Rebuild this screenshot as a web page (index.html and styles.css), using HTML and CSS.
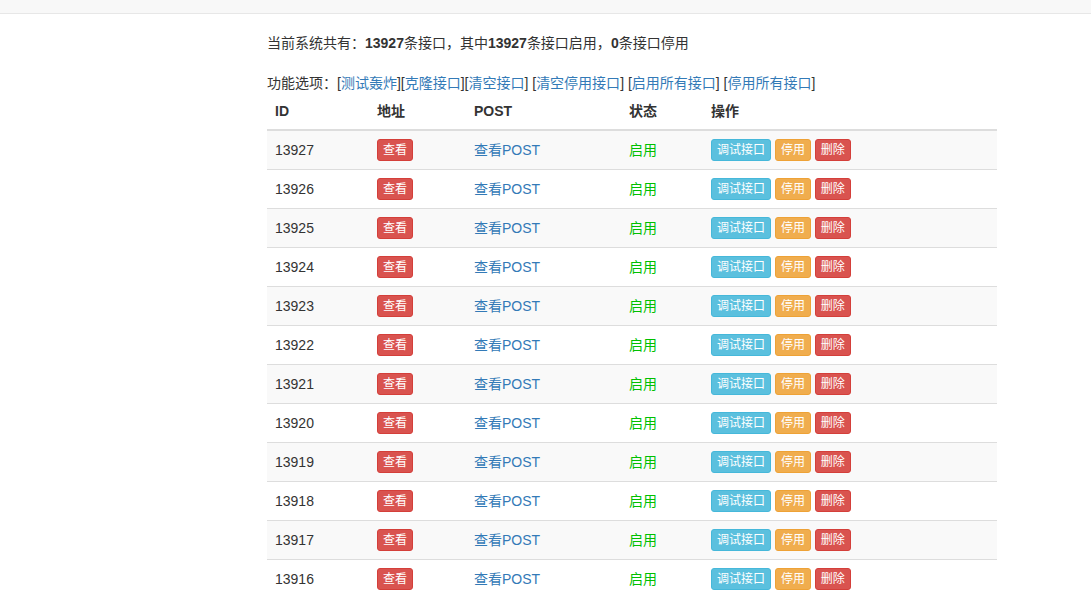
FILE: index.html
```html
<!DOCTYPE html>
<html>
<head>
  <meta charset="UTF-8">
  <title>接口管理</title>
  <link rel="stylesheet" href="styles.css">
</head>
<body>
  <div class="navbar"></div>
  <div class="container">
    当前系统共有：<b>13927</b>条接口，其中<b>13927</b>条接口启用，<b>0</b>条接口停用<br><br>
    功能选项：[<a href="#">测试轰炸</a>][<a href="#">克隆接口</a>][<a href="#">清空接口</a>] [<a href="#">清空停用接口</a>] [<a href="#">启用所有接口</a>] [<a href="#">停用所有接口</a>]
    <table class="table">
      <thead>
        <tr>
          <th class="c-id">ID</th>
          <th class="c-url">地址</th>
          <th class="c-post">POST</th>
          <th class="c-state">状态</th>
          <th>操作</th>
        </tr>
      </thead>
      <tbody id="rows"></tbody>
    </table>
  </div>
  <script>
    var rows = document.getElementById("rows");
    var html = "";
    // newest interfaces first
    for (var id = 13927; id >= 13914; id--) {
      html += "<tr>" +
        "<td>" + id + "</td>" +
        "<td><a class=\"btn btn-danger\" href=\"#\">查看</a></td>" +
        "<td><a href=\"#\">查看POST</a></td>" +
        "<td class=\"on\">启用</td>" +
        "<td><a class=\"btn btn-info\" href=\"#\">调试接口</a> " +
        "<a class=\"btn btn-warning\" href=\"#\">停用</a> " +
        "<a class=\"btn btn-danger\" href=\"#\">删除</a></td>" +
        "</tr>";
    }
    rows.innerHTML = html;
  </script>
</body>
</html>
```

FILE: styles.css
```css
body {
  margin: 0;
  font-family: "Liberation Sans", "Noto Sans CJK SC", sans-serif;
  font-size: 14px;
  line-height: 20px;
  color: #333;
  background: #fff;
}
a {
  color: #337ab7;
  text-decoration: none;
}
.navbar {
  height: 13px;
  background-color: #f8f8f8;
  border-bottom: 1px solid #e7e7e7;
  margin-bottom: 19px;
}
.container {
  width: 730px;
  margin-left: 267px;
}
.table {
  width: 730px;
  border-collapse: collapse;
  table-layout: fixed;
  margin-bottom: 20px;
}
.table th,
.table td {
  padding: 8px;
  text-align: left;
  vertical-align: middle;
  line-height: 20px;
  border-top: 1px solid #ddd;
}
.table td {
  height: 22px;
  padding-top: 8px;
  padding-bottom: 8px;
}
.table th {
  border-top: 0;
  border-bottom: 2px solid #ddd;
  font-weight: bold;
}
.table tbody tr:nth-child(odd) {
  background-color: #f9f9f9;
}
.c-id { width: 86px; }
.c-url { width: 81px; }
.c-post { width: 139px; }
.c-state { width: 66px; }
.on {
  color: #00c000;
}
.btn {
  display: inline-block;
  padding: 1px 5px;
  font-size: 12px;
  line-height: 18px;
  border: 1px solid transparent;
  border-radius: 3px;
  color: #fff;
  vertical-align: top;
}
.btn-danger {
  background-color: #d9534f;
  border-color: #d43f3a;
}
.btn-info {
  background-color: #5bc0de;
  border-color: #46b8da;
}
.btn-warning {
  background-color: #f0ad4e;
  border-color: #eea236;
}
```
